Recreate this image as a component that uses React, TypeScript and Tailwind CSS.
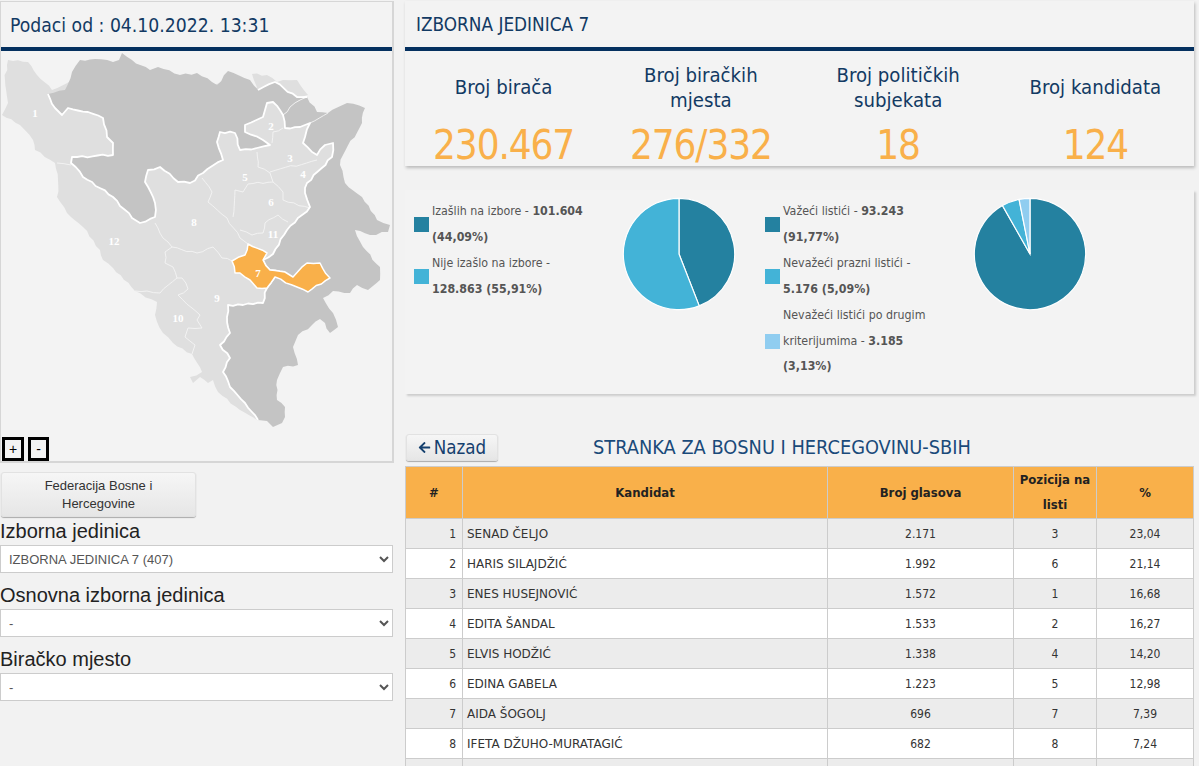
import { FaArrowLeft } from "react-icons/fa"

const nwRegion = "48,94 65,90 72,72 80,60 95,59 113,62 119,60 122,53 132,60 150,70 158,67 180,75 197,73 217,85 228,71 250,80 258,90 275,82 297,97 307,97 290,107 283,115 273,102 267,103 263,117 245,125 245,132 263,140 270,145 257,148 240,150 235,133 220,132 217,142 223,160 203,173 190,183 178,182 160,167 148,170 145,182 155,203 155,217 140,223 132,218 113,197 83,177 71,163 72,157 113,155 113,143 107,137 103,118 88,112 68,108 62,115 55,108"

const eastRegion = "307,97 317,112 328,113 347,103 365,108 362,123 343,155 340,165 345,183 362,197 377,220 390,225 388,232 370,235 355,230 363,247 380,267 380,280 368,290 357,285 350,293 333,291 323,298 333,313 338,327 330,333 325,323 320,319 312,325 298,335 293,347 298,365 283,367 277,380 277,400 285,407 285,417 282,423 273,427 267,421 258,420 245,403 230,387 223,372 230,358 220,345 230,333 227,317 228,305 263,303 267,288 275,277 297,287 308,292 330,278 320,263 307,263 293,277 285,272 270,270 263,260 273,254 287,230 310,207 305,193 307,183 332,157 333,143 325,145 317,155 303,143 305,137 310,123 300,127 285,128 283,115 290,107"

const lightRegion = "7,65 8,60 28,62 37,75 52,90 72,80 250,85 298,105 340,130 320,200 300,280 270,300 250,400 258,421 240,410 218,392 213,380 208,383 200,377 193,383 190,377 202,372 192,354 173,343 163,333 155,315 157,302 135,291 113,268 103,260 100,250 83,227 67,213 57,197 58,180 55,163 35,150 33,140 20,125 2,115 8,103 5,80"

const topPatch = "252,74 267,75 277,82 283,80 297,80 308,95 297,97 275,82 258,90"

const orangeRegion = "248,244 267,253 263,260 270,270 285,272 293,277 307,263 320,263 330,278 308,292 297,287 275,277 267,288 257,288 250,280 240,273 235,273 232,261 245,255"

const thickLines = [
  "48,94 55,108 62,115 68,108 88,112 103,118 107,137 113,143 113,155 72,157 71,163 83,177 113,197 132,218 140,223 155,217 155,203 145,182 148,170 160,167 178,182 190,183 203,173 223,160 217,142 220,132 235,133 240,150 257,148 270,145 263,140 245,132 245,125 263,117 267,103 273,102 283,115 285,128 300,127 310,123 305,137 303,143 317,155 325,145 333,143 332,157 307,183 305,193 310,207 287,230 273,254 263,260 270,270 285,272",
  "275,277 267,288 263,303 228,305 227,317 230,333 220,345 230,358 223,372 230,387 245,403 258,420",
  "258,90 275,82 297,97 307,97",
]

const thinLines = [
  "307,97 290,107 283,115",
  "328,113 310,123",
  "57,163 71,165",
  "155,223 163,238 172,247 165,252 165,263 173,267 177,278 160,293 147,291 135,291",
  "172,247 197,253 213,247 222,258 232,261",
  "177,278 182,278 188,289 178,295 192,308 200,315 197,320 202,328 188,328 185,337 195,345 192,354",
  "202,178 212,192 208,202 227,218 240,238 248,244",
  "233,217 235,190 243,192 248,184 273,182 283,192 283,200 310,208",
  "240,230 252,235 263,233 265,223 278,215 288,222",
  "257,152 258,167 270,173 273,182",
  "270,172 317,160",
  "283,128 273,132 272,143",
]

// roughen the borders a bit, same offset for an edge in both directions so shared edges still meet
function roughen(points: string, closed = false) {
  const pts = points.split(" ").map((p) => p.split(",").map(Number))
  const out: number[][] = []
  const count = closed ? pts.length : pts.length - 1
  for (let i = 0; i < count; i++) {
    const a = pts[i]
    const b = pts[(i + 1) % pts.length]
    out.push(a)
    const len = Math.hypot(b[0] - a[0], b[1] - a[1])
    const steps = Math.floor(len / 5)
    const flip = a[0] > b[0] || (a[0] === b[0] && a[1] > b[1]) ? -1 : 1
    for (let s = 1; s < steps; s++) {
      const k = flip > 0 ? s : steps - s
      const seed = Math.sin((a[0] + b[0]) * 12.9 + (a[1] + b[1]) * 78.2 + k * 37.7) * 4375.5
      const off = (seed - Math.floor(seed) - 0.5) * 2.2 * flip
      const t = s / steps
      out.push([a[0] + (b[0] - a[0]) * t - ((b[1] - a[1]) / len) * off, a[1] + (b[1] - a[1]) * t + ((b[0] - a[0]) / len) * off])
    }
  }
  if (!closed) out.push(pts[pts.length - 1])
  return out.map((p) => `${p[0].toFixed(1)},${p[1].toFixed(1)}`).join(" ")
}

const mapLabels = [
  { t: "1", x: 35, y: 117 },
  { t: "2", x: 271, y: 130 },
  { t: "3", x: 290, y: 162 },
  { t: "4", x: 303, y: 178 },
  { t: "5", x: 245, y: 181 },
  { t: "6", x: 271, y: 206 },
  { t: "8", x: 194, y: 226 },
  { t: "11", x: 273, y: 238 },
  { t: "12", x: 114, y: 245 },
  { t: "7", x: 258, y: 277 },
  { t: "9", x: 217, y: 302 },
  { t: "10", x: 178, y: 322 },
]

const stats = [
  { title: ["Broj birača"], value: "230.467" },
  { title: ["Broj biračkih", "mjesta"], value: "276/332" },
  { title: ["Broj političkih", "subjekata"], value: "18" },
  { title: ["Broj kandidata"], value: "124" },
]

const candidates = [
  ["1", "SENAD ČELJO", "2.171", "3", "23,04"],
  ["2", "HARIS SILAJDŽIĆ", "1.992", "6", "21,14"],
  ["3", "ENES HUSEJNOVIĆ", "1.572", "1", "16,68"],
  ["4", "EDITA ŠANDAL", "1.533", "2", "16,27"],
  ["5", "ELVIS HODŽIĆ", "1.338", "4", "14,20"],
  ["6", "EDINA GABELA", "1.223", "5", "12,98"],
  ["7", "AIDA ŠOGOLJ", "696", "7", "7,39"],
  ["8", "IFETA DŽUHO-MURATAGIĆ", "682", "8", "7,24"],
  ["", "", "", "", ""],
]

function Pie({ slices }: { slices: { value: number; color: string }[] }) {
  let start = 0
  const point = (p: number) => {
    const a = (p / 100) * Math.PI * 2
    return `${56 + 55.7 * Math.sin(a)} ${56 - 55.7 * Math.cos(a)}`
  }
  return (
    <svg width="112" height="112" viewBox="0 0 112 112" className="overflow-visible">
      {slices.map((s) => {
        const d = `M56 56 L${point(start)} A55.7 55.7 0 ${s.value > 50 ? 1 : 0} 1 ${point(start + s.value)} Z`
        start += s.value
        return <path key={s.color} d={d} fill={s.color} stroke="#fff" strokeWidth="1.2" />
      })}
    </svg>
  )
}

function LegendRow({ color, children }: { color: string; children: React.ReactNode }) {
  return (
    <div className="flex items-center mb-px">
      <span className="w-[15px] h-[15px] shrink-0" style={{ backgroundColor: color }} />
      <div className="ml-[3px] w-[160px] text-[12.3px] leading-[25.5px] text-[#555]">{children}</div>
    </div>
  )
}

function SelectField({ label, value }: { label: string; value: string }) {
  return (
    <div className="mb-[11px]">
      <div className="text-[20px] leading-[23px] text-[#222] h-[25px]">{label}</div>
      <select
        defaultValue={value}
        className="w-[393px] h-[28px] bg-white border border-[#ccc] text-[13px] text-[#555] pl-[4px] block"
      >
        <option>{value}</option>
      </select>
    </div>
  )
}

export default function App() {
  return (
    <div className="h-[766px] overflow-hidden bg-[#f2f2f2] flex font-['Liberation_Sans',sans-serif]">
      <div className="w-[394px] shrink-0 pt-px">
        <div className="h-[462px] bg-[#f3f3f3] border-l border-t border-r-2 border-b-2 border-[#d6d6d6] relative">
          <div className="h-[45px] flex items-center pt-[3px] pl-[9px] text-[#123a63] text-[19.2px] font-['DejaVu_Sans_Condensed','Noto_Sans',sans-serif]">
            Podaci od : 04.10.2022. 13:31
          </div>
          <div className="h-[4px] bg-[#04305f]" />
          <svg width="391" height="410" viewBox="1 51 391 410" className="block">
            <polygon points={roughen(lightRegion, true)} fill="#dfdfdf" />
            <polygon points={roughen(topPatch, true)} fill="#dfdfdf" />
            <polygon points={roughen(nwRegion, true)} fill="#c4c4c4" />
            <polygon points={roughen(eastRegion, true)} fill="#c4c4c4" />
            {thinLines.map((p) => (
              <polyline key={p} points={roughen(p)} fill="none" stroke="#f4f4f4" strokeWidth="0.9" strokeLinejoin="round" />
            ))}
            {thickLines.map((p) => (
              <polyline key={p} points={roughen(p)} fill="none" stroke="#fff" strokeWidth="1.8" strokeLinejoin="round" />
            ))}
            <polygon points={roughen(orangeRegion, true)} fill="#f9b04a" stroke="#fff" strokeWidth="1.5" strokeLinejoin="round" />
            {mapLabels.map((l) => (
              <text key={l.t} x={l.x} y={l.y} textAnchor="middle" fontSize="11" fontWeight="700" fill="#fff" fontFamily="'Liberation Serif', serif">
                {l.t}
              </text>
            ))}
          </svg>
          <div className="absolute left-px bottom-0 flex gap-[4px]">
            <button className="w-[22px] h-[24px] border-[3px] border-black text-[14px] leading-none text-black">+</button>
            <button className="w-[21px] h-[24px] border-[3px] border-black text-[14px] leading-none text-black">-</button>
          </div>
        </div>

        <button className="mt-[9px] ml-px block w-[195px] h-[45px] rounded-[3px] border border-[#e2e2e2] shadow-[0_1px_1px_#aaa] bg-gradient-to-b from-[#f6f6f6] to-[#e6e6e6] text-[13px] leading-[18px] text-[#333]">
          Federacija Bosne i
          <br />
          Hercegovine
        </button>

        <div className="mt-[3px]">
          <SelectField label="Izborna jedinica" value="IZBORNA JEDINICA 7 (407)" />
          <SelectField label="Osnovna izborna jedinica" value="-" />
          <SelectField label="Biračko mjesto" value="-" />
        </div>
      </div>

      <div className="w-[789px] ml-[11px] pt-px font-['DejaVu_Sans_Condensed','Noto_Sans',sans-serif]">
        <div className="h-[165px] bg-[#f3f3f3] shadow-[1px_2px_3px_#bbb]">
          <div className="h-[46px] flex items-center pt-[3px] pl-[11px] text-[18.8px] text-[#123a63]">IZBORNA JEDINICA 7</div>
          <div className="h-[4px] bg-[#04305f]" />
          <div className="grid grid-cols-4">
            {stats.map((s) => (
              <div key={s.value} className="text-center">
                <div className="h-[72px] flex flex-col justify-center pt-[1px] text-[20.2px] leading-[25px] text-[#123a63]">
                  {s.title.map((line) => (
                    <div key={line}>{line}</div>
                  ))}
                </div>
                <div className="text-[40px] leading-[44px] tracking-[-1.1px] text-[#f9b04a]">{s.value}</div>
              </div>
            ))}
          </div>
        </div>

        <div className="mt-[24px] h-[204px] bg-[#f3f3f3] shadow-[2px_2px_2px_#ccc] flex relative">
          <div className="w-[360px] pl-[9px] pt-[9px]">
            <LegendRow color="#2481a0">
              Izašlih na izbore - <b>101.604 (44,09%)</b>
            </LegendRow>
            <LegendRow color="#43b3d7">
              Nije izašlo na izbore - <b>128.863 (55,91%)</b>
            </LegendRow>
          </div>
          <div className="pt-[8px] -ml-[142px] w-[112px]">
            <Pie slices={[{ value: 44.09, color: "#2481a0" }, { value: 55.91, color: "#43b3d7" }]} />
          </div>
          <div className="w-[209px] pl-[30px] pt-[9px]">
            <LegendRow color="#2481a0">
              Važeći listići - <b>93.243 (91,77%)</b>
            </LegendRow>
            <LegendRow color="#43b3d7">
              Nevažeći prazni listići - <b>5.176 (5,09%)</b>
            </LegendRow>
            <LegendRow color="#90cdf0">
              Nevažeći listići po drugim kriterijumima - <b>3.185 (3,13%)</b>
            </LegendRow>
          </div>
          <div className="pt-[8px] ml-[30px] w-[112px]">
            <Pie slices={[{ value: 91.77, color: "#2481a0" }, { value: 5.09, color: "#43b3d7" }, { value: 3.13, color: "#90cdf0" }]} />
          </div>
        </div>

        <div className="mt-[40px] flex items-center h-[27px] pl-px">
          <button className="w-[92px] h-[27px] rounded-[3px] border border-[#e2e2e2] shadow-[0_1px_1px_#aaa] bg-gradient-to-b from-[#f6f6f6] to-[#e6e6e6] text-[18.6px] text-[#15406e] flex items-center justify-center gap-[3px]">
            <FaArrowLeft className="w-[13px] h-[13px]" />
            Nazad
          </button>
          <div className="flex-1 text-center text-[19.8px] text-[#1a4a7a] pr-[128px]">STRANKA ZA BOSNU I HERCEGOVINU-SBIH</div>
        </div>

        <table className="mt-[5px] w-[788px] table-fixed border-collapse text-[12px] text-[#333]">
          <colgroup>
            <col className="w-[57px]" />
            <col className="w-[365px]" />
            <col className="w-[186px]" />
            <col className="w-[83px]" />
            <col className="w-[97px]" />
          </colgroup>
          <thead>
            <tr className="h-[52px] bg-[#f9b04a] text-[#222] text-[13px] font-bold leading-[25px]">
              <th className="border border-[#ccc] pb-px">#</th>
              <th className="border border-[#ccc] pb-px">Kandidat</th>
              <th className="border border-[#ccc] pb-px">Broj glasova</th>
              <th className="border border-[#ccc] pb-px">Pozicija na listi</th>
              <th className="border border-[#ccc] pb-px">%</th>
            </tr>
          </thead>
          <tbody>
            {candidates.map((c, i) => (
              <tr key={i} className={i % 2 === 0 ? "h-[30px] bg-[#ececec]" : "h-[30px] bg-white"}>
                <td className="border border-[#ccc] text-right pr-[6px]">{c[0]}</td>
                <td className="border border-[#ccc] pl-[4px] font-['DejaVu_Sans',sans-serif]">{c[1]}</td>
                <td className="border border-[#ccc] text-center">{c[2]}</td>
                <td className="border border-[#ccc] text-center">{c[3]}</td>
                <td className="border border-[#ccc] text-center">{c[4]}</td>
              </tr>
            ))}
          </tbody>
        </table>
      </div>
    </div>
  )
}
